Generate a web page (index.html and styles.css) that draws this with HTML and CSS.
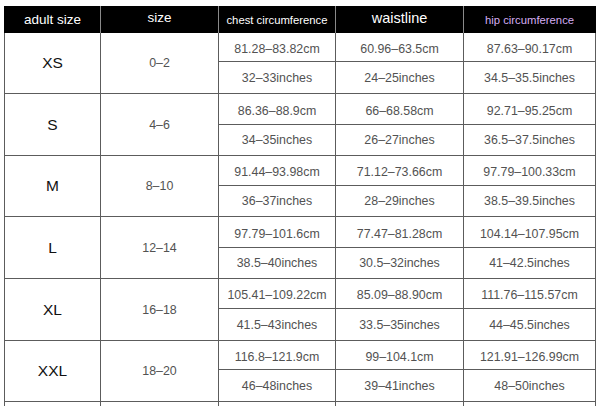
FILE: index.html
```html
<!DOCTYPE html>
<html>
<head>
<meta charset="utf-8">
<link rel="stylesheet" href="styles.css">
</head>
<body>
<div class="chart">
  <div class="hd first">adult size</div>
  <div class="hd size-h">size</div>
  <div class="hd small">chest circumference</div>
  <div class="hd waist">waistline</div>
  <div class="hd small hip last">hip circumference</div>

  <div class="cell first letter span">XS</div>
  <div class="cell num span">0–2</div>
  <div class="cell num top">81.28–83.82cm</div>
  <div class="cell num top">60.96–63.5cm</div>
  <div class="cell num top">87.63–90.17cm</div>
  <div class="cell num">32–33inches</div>
  <div class="cell num">24–25inches</div>
  <div class="cell num">34.5–35.5inches</div>

  <div class="cell first letter span">S</div>
  <div class="cell num span">4–6</div>
  <div class="cell num top">86.36–88.9cm</div>
  <div class="cell num top">66–68.58cm</div>
  <div class="cell num top">92.71–95.25cm</div>
  <div class="cell num">34–35inches</div>
  <div class="cell num">26–27inches</div>
  <div class="cell num">36.5–37.5inches</div>

  <div class="cell first letter span">M</div>
  <div class="cell num span">8–10</div>
  <div class="cell num top">91.44–93.98cm</div>
  <div class="cell num top">71.12–73.66cm</div>
  <div class="cell num top">97.79–100.33cm</div>
  <div class="cell num">36–37inches</div>
  <div class="cell num">28–29inches</div>
  <div class="cell num">38.5–39.5inches</div>

  <div class="cell first letter span">L</div>
  <div class="cell num span">12–14</div>
  <div class="cell num top">97.79–101.6cm</div>
  <div class="cell num top">77.47–81.28cm</div>
  <div class="cell num top">104.14–107.95cm</div>
  <div class="cell num">38.5–40inches</div>
  <div class="cell num">30.5–32inches</div>
  <div class="cell num">41–42.5inches</div>

  <div class="cell first letter span">XL</div>
  <div class="cell num span">16–18</div>
  <div class="cell num top">105.41–109.22cm</div>
  <div class="cell num top">85.09–88.90cm</div>
  <div class="cell num top">111.76–115.57cm</div>
  <div class="cell num">41.5–43inches</div>
  <div class="cell num">33.5–35inches</div>
  <div class="cell num">44–45.5inches</div>

  <div class="cell first letter span">XXL</div>
  <div class="cell num span">18–20</div>
  <div class="cell num top">116.8–121.9cm</div>
  <div class="cell num top">99–104.1cm</div>
  <div class="cell num top">121.91–126.99cm</div>
  <div class="cell num">46–48inches</div>
  <div class="cell num">39–41inches</div>
  <div class="cell num">48–50inches</div>

  <div class="cell first tail"></div>
  <div class="cell tail"></div>
  <div class="cell tail"></div>
  <div class="cell tail"></div>
  <div class="cell tail"></div>
</div>
</body>
</html>
```

FILE: styles.css
```css
html, body {
  margin: 0;
  padding: 0;
  background: #fff;
  overflow: hidden;
}
body {
  font-family: "Liberation Sans", Arial, sans-serif;
}
.chart {
  display: grid;
  grid-template-columns: 97px 118px 117px 128px 132px;
  grid-template-rows: 27px 29px 32px 31px 31px 30px 31px 31px 31px 30px 32px 29px 32px 6px;
  margin: 6px 0 0 4px;
}
.hd {
  background: #000;
  color: #fff;
  display: flex;
  align-items: center;
  justify-content: center;
  font-size: 13.5px;
  border-right: 1px solid #8a8a8a;
  box-sizing: border-box;
  white-space: nowrap;
}
.hd.first { border-left: 1px solid #000; }
.hd.last { border-right-color: #000; }
.hd.size-h { font-size: 13.5px; padding-bottom: 4px; }
.hd.small { font-size: 11.3px; }
.hd.waist { font-size: 14.5px; padding-bottom: 3px; }
.hd.hip { color: #d4acf2; }

.cell {
  box-sizing: border-box;
  border-right: 1px solid #5c5c5c;
  border-bottom: 1px solid #5c5c5c;
  display: flex;
  align-items: center;
  justify-content: center;
  white-space: nowrap;
}
.cell.first { border-left: 1px solid #5c5c5c; }
.span { grid-row: span 2; }
.letter {
  font-size: 15.5px;
  color: #111;
}
.num {
  font-size: 12.4px;
  color: #525252;
}
.num.top { padding-top: 3px; }
.tail { border-bottom: none; }
```
